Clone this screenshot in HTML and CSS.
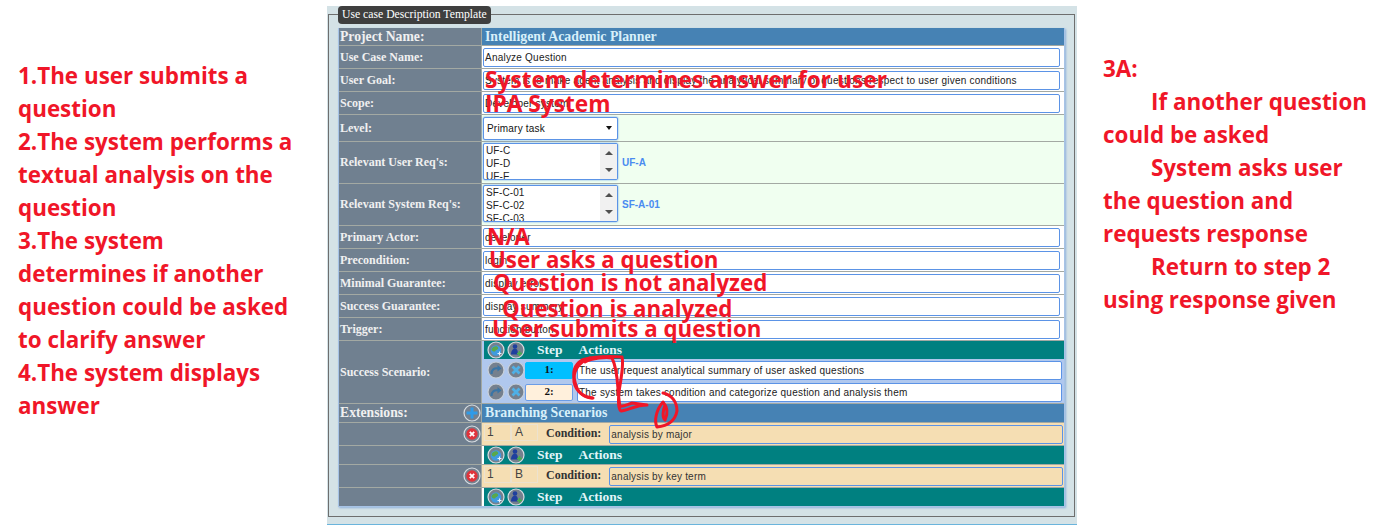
FILE: index.html
```html
<!DOCTYPE html>
<html lang="en">

<head>
  <title>Use case Description Template</title>
  <meta charset="utf-8">
  <link rel="stylesheet" href="styles.css">
</head>

<body>
  <svg class="icon-defs" width="0" height="0">
    <symbol id="icon-globe" viewBox="0 0 18 18">
      <circle cx="9" cy="9" r="8" fill="#75808e" stroke="#d8dde2" stroke-width="1.2" />
      <circle cx="9" cy="9.500" r="5.200" fill="#3f9be0" />
      <path d="M4.500 8c2-3.500 5.500-3.500 6.500-1.500 1 2-2 2-3 4-2 0-3.500-.5-3.500-2.500z" fill="#5aa84a" />
      <path d="M10.500 12.500h4M12.500 10.500v4" stroke="#e6f2ff" stroke-width="1.100" />
    </symbol>
    <symbol id="icon-user" viewBox="0 0 18 18">
      <circle cx="9" cy="9" r="8" fill="#75808e" stroke="#d8dde2" stroke-width="1.2" />
      <circle cx="8" cy="5.500" r="2.300" fill="#1f3f9e" />
      <path d="M4 13.500c0-3.500 1.800-6 4-6s3 2 3 6z" fill="#1f3f9e" />
      <path d="M10 12.500h5M12.500 10v5" stroke="#46b04a" stroke-width="1.600" />
    </symbol>
    <symbol id="icon-redo" viewBox="0 0 18 18">
      <circle cx="9" cy="9" r="8" fill="#75808e" stroke="#c8d0da" stroke-width="1.200" />
      <path d="M4.500 13c0-4.500 3-6.500 7-5.500" fill="none" stroke="#3a75a6" stroke-width="2.200" />
      <path d="M10.500 4l4 3.500-4 3z" fill="#3a75a6" />
    </symbol>
    <symbol id="icon-cross" viewBox="0 0 18 18">
      <circle cx="9" cy="9" r="8" fill="#75808e" stroke="#c8d0da" stroke-width="1.200" />
      <path d="M5.500 5.500l7 7M12.500 5.500l-7 7" stroke="#4fb0e6" stroke-width="2.800" />
    </symbol>
    <symbol id="icon-add" viewBox="0 0 18 18">
      <circle cx="9" cy="9" r="8" fill="#75808e" stroke="#d8dde2" stroke-width="1.200" />
      <path d="M9 3.500v11M3.500 9h11" stroke="#2f9be8" stroke-width="3" />
    </symbol>
    <symbol id="icon-remove" viewBox="0 0 18 18">
      <circle cx="9" cy="9" r="8" fill="#75808e" stroke="#d8dde2" stroke-width="1.200" />
      <circle cx="9" cy="9" r="5.700" fill="#e0343c" />
      <path d="M6.800 6.800l4.400 4.400M11.200 6.800l-4.400 4.400" stroke="#fff" stroke-width="1.800" />
    </symbol>
  </svg>

  <div class="page">
    <div class="note note-left">
      <p>1.The user submits a question</p>
      <p>2.The system performs a textual analysis on the question</p>
      <p>3.The system determines if another question could be asked to clarify answer</p>
      <p>4.The system displays answer</p>
    </div>

    <div class="panel">
      <div class="frame">
        <div class="legend">Use case Description Template</div>
        <div class="table">
          <div class="row row-head">
            <div class="label label-big">Project Name:</div>
            <div class="value value-blue">Intelligent Academic Planner</div>
          </div>
          <div class="row row-field">
            <div class="label">Use Case Name:</div>
            <div class="value"><div class="field">Analyze Question</div></div>
          </div>
          <div class="row row-field">
            <div class="label">User Goal:</div>
            <div class="value"><div class="field">System is to make agent analysis and display the analytical summary of questions respect to user given conditions</div></div>
          </div>
          <div class="row row-field">
            <div class="label">Scope:</div>
            <div class="value"><div class="field">Developer system</div></div>
          </div>
          <div class="row row-level">
            <div class="label">Level:</div>
            <div class="value value-mint">
              <div class="select">Primary task<span class="select-arrow"></span></div>
            </div>
          </div>
          <div class="row row-list">
            <div class="label">Relevant User Req's:</div>
            <div class="value value-mint">
              <div class="listbox">
                <div class="list-items"><div>UF-C</div><div>UF-D</div><div>UF-E</div></div>
                <div class="scrollbar"><span class="arrow-up"></span><span class="arrow-down"></span></div>
              </div>
              <span class="req">UF-A</span>
            </div>
          </div>
          <div class="row row-list">
            <div class="label">Relevant System Req's:</div>
            <div class="value value-mint">
              <div class="listbox">
                <div class="list-items"><div>SF-C-01</div><div>SF-C-02</div><div>SF-C-03</div></div>
                <div class="scrollbar"><span class="arrow-up"></span><span class="arrow-down"></span></div>
              </div>
              <span class="req">SF-A-01</span>
            </div>
          </div>
          <div class="row row-field">
            <div class="label">Primary Actor:</div>
            <div class="value"><div class="field">developer</div></div>
          </div>
          <div class="row row-field">
            <div class="label">Precondition:</div>
            <div class="value"><div class="field">login</div></div>
          </div>
          <div class="row row-field">
            <div class="label">Minimal Guarantee:</div>
            <div class="value"><div class="field">display error</div></div>
          </div>
          <div class="row row-field">
            <div class="label">Success Guarantee:</div>
            <div class="value"><div class="field">display summery</div></div>
          </div>
          <div class="row row-field">
            <div class="label">Trigger:</div>
            <div class="value"><div class="field">function button</div></div>
          </div>
          <div class="row row-scenario">
            <div class="label">Success Scenario:</div>
            <div class="value value-steps">
              <div class="steps-head">
                <svg class="icon"><use href="#icon-globe" /></svg>
                <svg class="icon"><use href="#icon-user" /></svg>
                <span class="steps-title">Step</span>
                <span class="steps-title">Actions</span>
              </div>
              <div class="step">
                <svg class="icon"><use href="#icon-redo" /></svg>
                <svg class="icon"><use href="#icon-cross" /></svg>
                <div class="step-num step-active">1:</div>
                <div class="field step-text">The user request analytical summary of user asked questions</div>
              </div>
              <div class="step">
                <svg class="icon"><use href="#icon-redo" /></svg>
                <svg class="icon"><use href="#icon-cross" /></svg>
                <div class="step-num">2:</div>
                <div class="field step-text">The system takes condition and categorize question and analysis them</div>
              </div>
            </div>
          </div>
          <div class="row row-ext">
            <div class="label label-big label-icon">Extensions:<svg class="icon"><use href="#icon-add" /></svg></div>
            <div class="value value-blue">Branching Scenarios</div>
          </div>
          <div class="row row-field">
            <div class="label label-end"><svg class="icon"><use href="#icon-remove" /></svg></div>
            <div class="value value-cond">
              <div class="cond-cell cond-num">1</div>
              <div class="cond-cell cond-letter">A</div>
              <span class="cond-label">Condition:</span>
              <div class="cond-field">analysis by major</div>
            </div>
          </div>
          <div class="row row-bar">
            <div class="label"></div>
            <div class="value value-bar">
              <div class="steps-head">
                <svg class="icon"><use href="#icon-globe" /></svg>
                <svg class="icon"><use href="#icon-user" /></svg>
                <span class="steps-title">Step</span>
                <span class="steps-title">Actions</span>
              </div>
            </div>
          </div>
          <div class="row row-field">
            <div class="label label-end"><svg class="icon"><use href="#icon-remove" /></svg></div>
            <div class="value value-cond">
              <div class="cond-cell cond-num">1</div>
              <div class="cond-cell cond-letter">B</div>
              <span class="cond-label">Condition:</span>
              <div class="cond-field">analysis by key term</div>
            </div>
          </div>
          <div class="row row-bar">
            <div class="label"></div>
            <div class="value value-bar">
              <div class="steps-head">
                <svg class="icon"><use href="#icon-globe" /></svg>
                <svg class="icon"><use href="#icon-user" /></svg>
                <span class="steps-title">Step</span>
                <span class="steps-title">Actions</span>
              </div>
            </div>
          </div>
        </div>
      </div>
    </div>

    <div class="note note-right">
      <p>3A:</p>
      <p class="indent">If another question could be asked</p>
      <p class="indent">System asks user the question and requests response</p>
      <p class="indent">Return to step 2 using response given</p>
    </div>
  </div>

  <!-- hand written notes on top of the form -->
  <span class="scrawl scrawl-goal">System determines answer for user</span>
  <span class="scrawl scrawl-scope">IPA System</span>
  <span class="scrawl scrawl-actor">N/A</span>
  <span class="scrawl scrawl-pre">User asks a question</span>
  <span class="scrawl scrawl-min">Question is not analyzed</span>
  <span class="scrawl scrawl-succ">Question is analyzed</span>
  <span class="scrawl scrawl-trig">User submits a question</span>
  <svg class="scribble" viewBox="560 345 130 95">
    <path d="M593 398C583 398 577 391 575 382 572 372 574 365 582 360 592 356 612 356 622 357 624 365 621 378 619 392 618 402 619 410 621 411 628 410 637 405 647 405L632 403C626 405 623 407 620 406 617 392 619 372 612 358 606 357 592 358 585 362" />
    <path d="M590 358C578 362 573 372 574 382 576 392 584 397 592 398" />
    <path d="M663 393C672 395 677 402 677 411 675 421 668 426 657 427 654 421 656 410 663 402 668 408 668 414 665 420 662 417 663 410 665 405" />
  </svg>
</body>

</html>
```

FILE: styles.css
```css
* {
  box-sizing: border-box;
}

body {
  margin: 0;
  position: relative;
  height: 527px;
  overflow: hidden;
  background-color: #ffffff;
  font-family: "Liberation Serif", serif;
}

.icon-defs {
  position: absolute;
}

.page {
  display: flex;
  align-items: flex-start;
}

/* red notes left and right of the form */
.note {
  flex: none;
  font-family: "Open Sans", sans-serif;
  font-size: 22.4px;
  font-weight: bold;
  line-height: 33px;
  color: #f01628;
}

.note p {
  margin: 0;
}

.note-left {
  width: 327px;
  padding: 59px 30px 0 18px;
}

.note-right {
  width: 293px;
  padding: 52px 0 0 26px;
}

.note-right .indent {
  text-indent: 48px;
}

/* form */
.panel {
  flex: none;
  width: 750px;
  height: 519px;
  margin-top: 6px;
  padding: 8px 2px 7px 1px;
  background-color: #d4e2e6;
  border-bottom: 1px solid #6ab4dc;
}

.frame {
  position: relative;
  height: 503px;
  padding: 13px 9px 0 9px;
  border: 1px solid #6e6e6e;
}

.legend {
  position: absolute;
  top: -9px;
  left: 9px;
  height: 18px;
  padding: 0 4px;
  background-color: #3f3f3f;
  border-radius: 4px;
  color: #ffffff;
  font-size: 11.7px;
  line-height: 18px;
}

.table {
  width: 727px;
  background-color: #a3a9a3;
  box-shadow: 1px 1px 2px #8fb2dc;
  border: 1px solid #a7c3e6;
  border-width: 0 1px 1px 1px;
}

.row {
  display: flex;
  border-top: 1px solid #a3a9a3;
}

.row-head {
  height: 17px;
  border-top: 0;
}

.row-field {
  height: 23px;
}

.row-level {
  height: 27px;
}

.row-list {
  height: 42px;
}

.row-scenario {
  height: 63px;
}

.row-ext {
  height: 19px;
}

.row-bar {
  height: 19px;
}

.label {
  width: 142px;
  flex: none;
  display: flex;
  align-items: center;
  padding-left: 1px;
  background-color: #708090;
  color: #f0f0f0;
  font-size: 12px;
  font-weight: bold;
}

.label-big {
  font-size: 13.7px;
}

.label-icon {
  justify-content: space-between;
  padding-right: 0;
}

.label-end {
  justify-content: flex-end;
}

.value {
  flex: 1;
  display: flex;
  align-items: center;
  margin-left: 1px;
  background-color: #ffffff;
}

.value-blue {
  padding-left: 3px;
  background-color: #4682b4;
  color: #d8f0fa;
  font-size: 13.8px;
  font-weight: bold;
}

.value-mint {
  background-color: #f0fff0;
}

.field {
  width: 577px;
  height: 19px;
  margin-left: 1px;
  padding-left: 1px;
  background-color: #ffffff;
  border: 1px solid #5b93e6;
  border-radius: 2px;
  color: #222222;
  font-family: "Liberation Sans", sans-serif;
  font-size: 10px;
  line-height: 18px;
  letter-spacing: 0.22px;
  white-space: nowrap;
  overflow: hidden;
}

.select {
  position: relative;
  width: 135px;
  height: 23px;
  margin-left: 1px;
  padding-left: 3px;
  border: 1px solid #5b93e6;
  border-radius: 2px;
  box-shadow: 0 0 2px #5b93e6;
  background-color: #ffffff;
  font-family: "Liberation Sans", sans-serif;
  font-size: 10px;
  line-height: 21px;
  letter-spacing: 0.2px;
  color: #111111;
}

.select-arrow {
  position: absolute;
  top: 8px;
  right: 5px;
  border-style: solid;
  border-width: 4px 3px 0 3px;
  border-color: #111111 transparent transparent transparent;
}

.listbox {
  display: flex;
  align-self: flex-start;
  width: 135px;
  height: 37px;
  margin: 1px 0 0 1px;
  border: 1px solid #5b93e6;
  border-radius: 2px;
  box-shadow: 0 0 2px #5b93e6;
  background-color: #ffffff;
  overflow: hidden;
}

.list-items {
  flex: 1;
  padding-left: 2px;
  font-family: "Liberation Sans", sans-serif;
  font-size: 10px;
  line-height: 13px;
  letter-spacing: 0.1px;
  color: #222222;
}

.scrollbar {
  width: 17px;
  display: flex;
  flex-direction: column;
  align-items: center;
  justify-content: space-between;
  padding: 7px 0;
  background-color: #f1f1f1;
}

.arrow-up,
.arrow-down {
  border-style: solid;
  border-color: transparent;
}

.arrow-up {
  border-width: 0 4px 4px 4px;
  border-bottom-color: #505050;
}

.arrow-down {
  border-width: 4px 4px 0 4px;
  border-top-color: #505050;
}

.req {
  margin-left: 4px;
  color: #4a8cf0;
  font-family: "Liberation Sans", sans-serif;
  font-size: 10px;
  font-weight: bold;
}

.icon {
  display: block;
  flex: none;
  width: 18px;
  height: 18px;
}

.icon + .icon {
  margin-left: 2px;
}

.value-steps {
  display: block;
  padding-left: 2px;
  background-color: #b0c8ee;
}

.value-bar {
  padding-left: 2px;
  background-color: #ffffff;
}

.steps-head {
  display: flex;
  align-items: center;
  width: 100%;
  height: 18px;
  padding-left: 3px;
  background-color: #008080;
}

.steps-title {
  margin-left: 12px;
  color: #e0f5fa;
  font-size: 13.5px;
  font-weight: bold;
}

.steps-title + .steps-title {
  margin-left: 16px;
}

.step {
  display: flex;
  align-items: center;
  height: 22px;
  padding-left: 3px;
}

.step .field {
  width: 485px;
  margin-left: 4px;
}

.step-num {
  width: 48px;
  height: 17px;
  background-color: #fff0dc;
  border: 1px solid #6b9ce6;
  border-radius: 2px;
  color: #111111;
  font-size: 11px;
  font-weight: bold;
  line-height: 13px;
  text-align: center;
}

.step-active {
  background-color: #00bfff;
  border-color: #00bfff;
}

.value-cond {
  padding: 0 1px 0 2px;
  background-color: #f5deb3;
}

.cond-cell {
  height: 17px;
  margin-bottom: 3px;
  padding-left: 2px;
  border: 1px solid #ece2cf;
  background-color: #f5deb3;
  color: #444444;
  font-family: "Liberation Sans", sans-serif;
  font-size: 12px;
  line-height: 15px;
}

.cond-num {
  width: 27px;
}

.cond-letter {
  width: 27px;
  padding-left: 3px;
}

.cond-label {
  margin: 0 8px 1px 8px;
  color: #333333;
  font-size: 12px;
  font-weight: bold;
  white-space: nowrap;
}

.cond-field {
  flex: 1;
  height: 19px;
  padding-left: 1px;
  border: 1px solid #5b93e6;
  border-radius: 2px;
  color: #333333;
  font-family: "Liberation Sans", sans-serif;
  font-size: 10px;
  line-height: 18px;
  letter-spacing: 0.2px;
}

/* annotations drawn on top of the screenshot */
.scrawl {
  position: absolute;
  color: #f01628;
  font-family: "Open Sans", sans-serif;
  font-size: 22.3px;
  font-weight: bold;
  line-height: 30px;
  white-space: nowrap;
}

.scrawl-goal {
  left: 485px;
  top: 65px;
  font-size: 22.7px;
}

.scrawl-scope {
  left: 485px;
  top: 89px;
  font-size: 22.7px;
}

.scrawl-actor {
  left: 487px;
  top: 222px;
}

.scrawl-pre {
  left: 489px;
  top: 245px;
}

.scrawl-min {
  left: 493px;
  top: 268px;
}

.scrawl-succ {
  left: 502px;
  top: 294px;
}

.scrawl-trig {
  left: 492px;
  top: 314px;
}

.scribble {
  position: absolute;
  left: 560px;
  top: 345px;
  width: 130px;
  height: 95px;
  fill: none;
  stroke: #f01628;
  stroke-width: 3;
  stroke-linecap: round;
  stroke-linejoin: round;
}
```
